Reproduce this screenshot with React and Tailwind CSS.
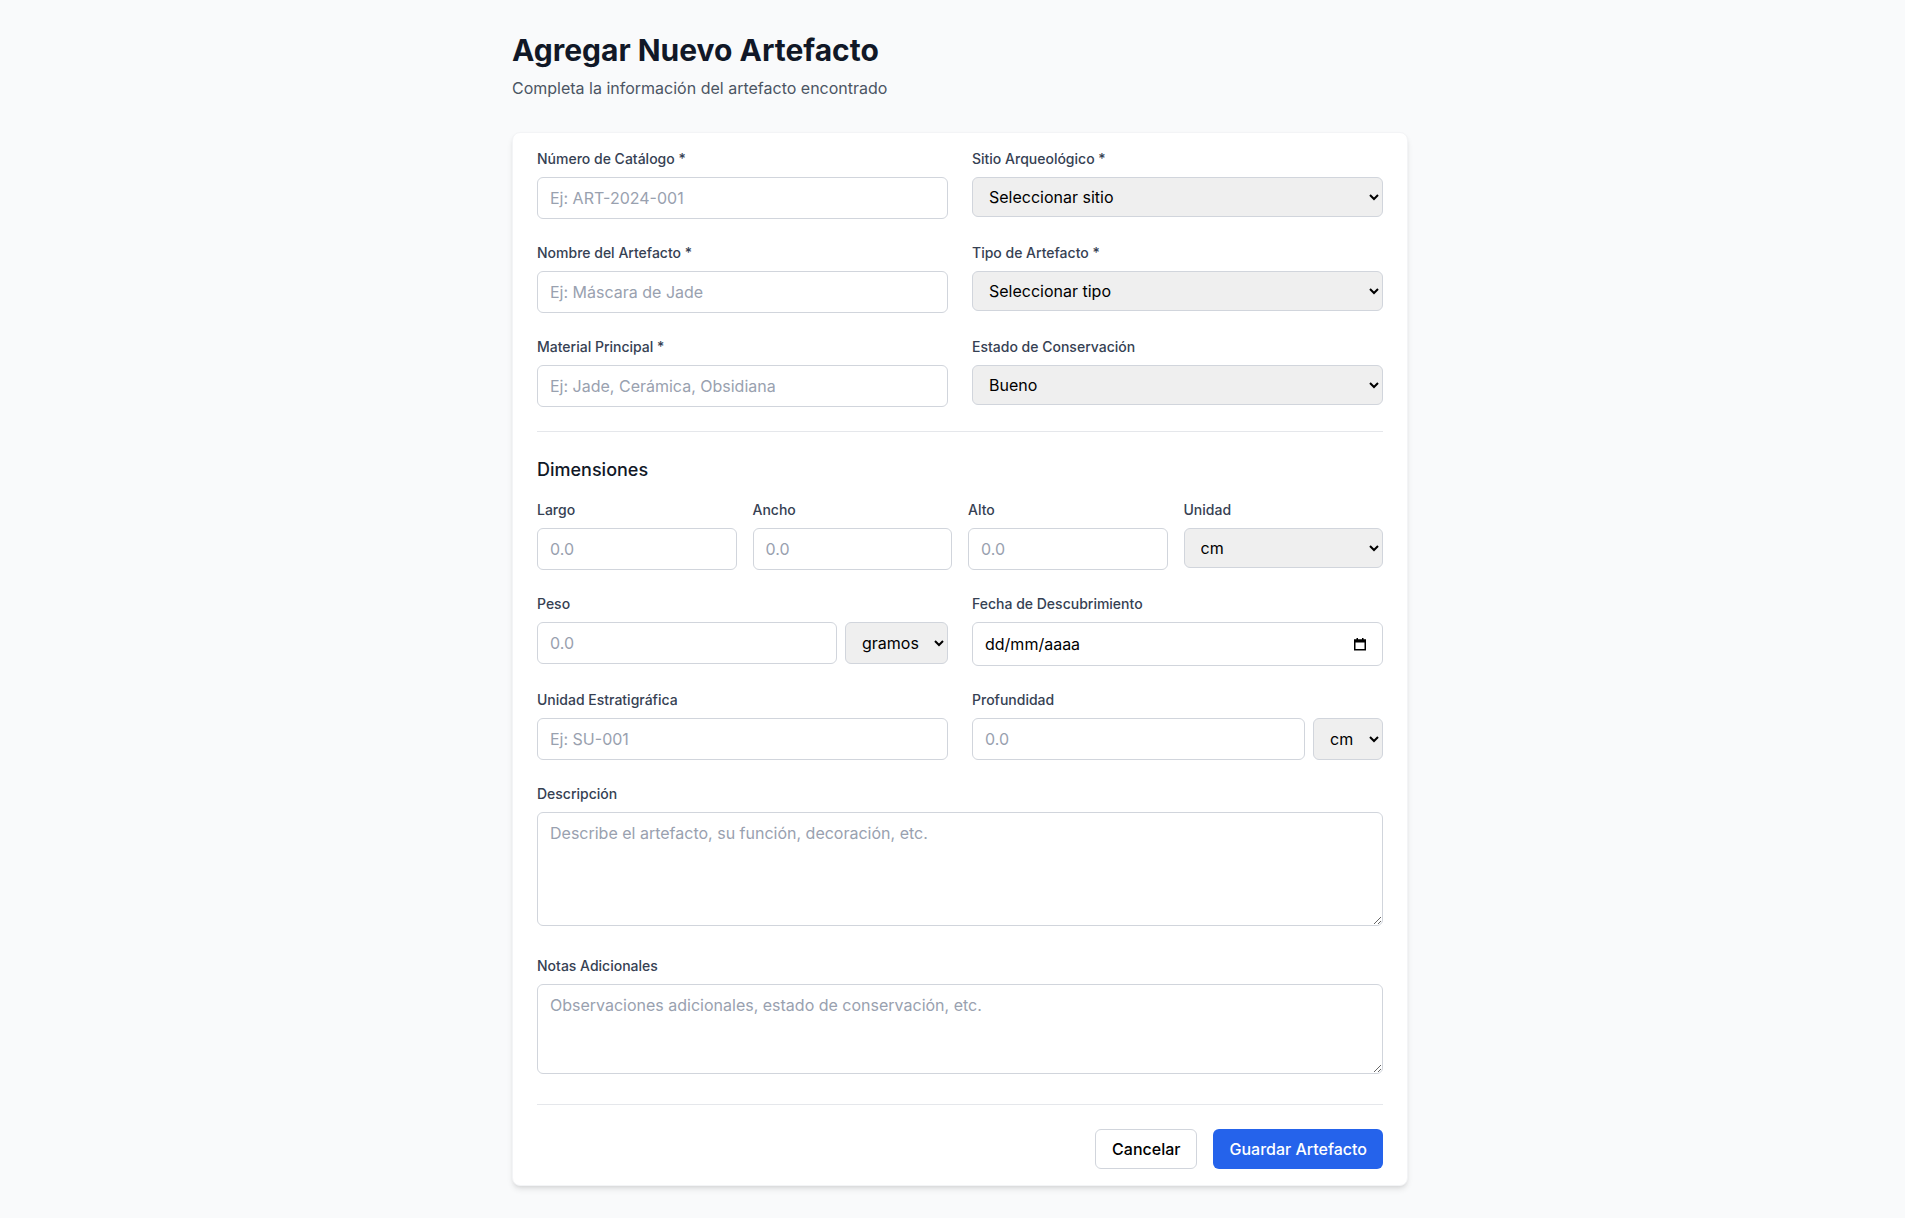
import { useState } from 'react';

const inputClass = 'w-full px-3 py-2 border border-gray-300 rounded-md text-gray-900 placeholder-gray-400 focus:outline-none';
const selectClass = 'w-full px-3 py-2 border border-gray-300 rounded-md bg-[#efefef] text-black focus:outline-none';
const labelClass = 'block text-sm font-medium text-gray-700 mb-2';

const CalendarIcon = () => (
    <svg width="14" height="14" viewBox="0 0 14 14" className="text-black">
        <rect x="1.75" y="3.25" width="10.5" height="9.5" fill="none" stroke="currentColor" strokeWidth="1.5" />
        <rect x="1" y="2.5" width="12" height="3" fill="currentColor" />
        <rect x="3.5" y="1" width="1.5" height="2" fill="currentColor" />
        <rect x="9" y="1" width="1.5" height="2" fill="currentColor" />
    </svg>
);

const App = () => {
    const [form, setForm] = useState({
        catalogo: '',
        sitio: '',
        nombre: '',
        tipo: '',
        material: '',
        estado: 'bueno',
        largo: '',
        ancho: '',
        alto: '',
        unidad: 'cm',
        peso: '',
        unidadPeso: 'gramos',
        estrato: '',
        profundidad: '',
        unidadProf: 'cm',
        descripcion: '',
        notas: ''
    });

    const update = (key) => (e) => setForm({ ...form, [key]: e.target.value });

    return (
        <div className="min-h-screen bg-[#f9fafb] pl-[15px] font-['Inter',sans-serif]">
            <div className="max-w-4xl mx-auto py-8">
                <h1 className="text-3xl font-bold text-[#111827]">Agregar Nuevo Artefacto</h1>
                <p className="mt-2 text-[#4b5563]">Completa la información del artefacto encontrado</p>

                <form onSubmit={(e) => e.preventDefault()} className="mt-8 bg-white border border-gray-100 rounded-lg shadow-md px-6 py-4">

                    {/* Datos generales */}
                    <div className="grid grid-cols-2 gap-6">
                        <div>
                            <label className={labelClass}>Número de Catálogo *</label>
                            <input type="text" value={form.catalogo} onChange={update('catalogo')} placeholder="Ej: ART-2024-001" className={inputClass} />
                        </div>
                        <div>
                            <label className={labelClass}>Sitio Arqueológico *</label>
                            <select value={form.sitio} onChange={update('sitio')} className={selectClass}>
                                <option value="">Seleccionar sitio</option>
                                <option value="1">Teotihuacán</option>
                                <option value="2">Palenque</option>
                            </select>
                        </div>
                        <div>
                            <label className={labelClass}>Nombre del Artefacto *</label>
                            <input type="text" value={form.nombre} onChange={update('nombre')} placeholder="Ej: Máscara de Jade" className={inputClass} />
                        </div>
                        <div>
                            <label className={labelClass}>Tipo de Artefacto *</label>
                            <select value={form.tipo} onChange={update('tipo')} className={selectClass}>
                                <option value="">Seleccionar tipo</option>
                                <option value="ceramica">Cerámica</option>
                                <option value="litico">Lítico</option>
                            </select>
                        </div>
                        <div>
                            <label className={labelClass}>Material Principal *</label>
                            <input type="text" value={form.material} onChange={update('material')} placeholder="Ej: Jade, Cerámica, Obsidiana" className={inputClass} />
                        </div>
                        <div>
                            <label className={labelClass}>Estado de Conservación</label>
                            <select value={form.estado} onChange={update('estado')} className={selectClass}>
                                <option value="excelente">Excelente</option>
                                <option value="bueno">Bueno</option>
                                <option value="regular">Regular</option>
                                <option value="malo">Malo</option>
                            </select>
                        </div>
                    </div>

                    {/* Dimensiones */}
                    <div className="mt-6 pt-6 border-t border-gray-200">
                        <h3 className="text-lg font-medium text-[#111827] mb-4">Dimensiones</h3>
                        <div className="grid grid-cols-4 gap-4">
                            <div>
                                <label className={labelClass}>Largo</label>
                                <input type="number" value={form.largo} onChange={update('largo')} placeholder="0.0" className={inputClass} />
                            </div>
                            <div>
                                <label className={labelClass}>Ancho</label>
                                <input type="number" value={form.ancho} onChange={update('ancho')} placeholder="0.0" className={inputClass} />
                            </div>
                            <div>
                                <label className={labelClass}>Alto</label>
                                <input type="number" value={form.alto} onChange={update('alto')} placeholder="0.0" className={inputClass} />
                            </div>
                            <div>
                                <label className={labelClass}>Unidad</label>
                                <select value={form.unidad} onChange={update('unidad')} className={selectClass}>
                                    <option value="cm">cm</option>
                                    <option value="mm">mm</option>
                                    <option value="m">m</option>
                                </select>
                            </div>
                        </div>
                    </div>

                    <div className="mt-6 grid grid-cols-2 gap-6">
                        <div>
                            <label className={labelClass}>Peso</label>
                            <div className="flex gap-2">
                                <input type="number" value={form.peso} onChange={update('peso')} placeholder="0.0" className={inputClass} />
                                <select value={form.unidadPeso} onChange={update('unidadPeso')} className="px-3 py-2 border border-gray-300 rounded-md bg-[#efefef] text-black focus:outline-none">
                                    <option value="gramos">gramos</option>
                                    <option value="kg">kg</option>
                                </select>
                            </div>
                        </div>
                        <div>
                            <label className={labelClass}>Fecha de Descubrimiento</label>
                            <div className="relative">
                                <input type="text" readOnly value="dd/mm/aaaa" className="w-full h-[44px] px-3 border border-gray-300 rounded-md text-black focus:outline-none" />
                                <span className="absolute right-[16px] top-[15px]">
                                    <CalendarIcon />
                                </span>
                            </div>
                        </div>
                        <div>
                            <label className={labelClass}>Unidad Estratigráfica</label>
                            <input type="text" value={form.estrato} onChange={update('estrato')} placeholder="Ej: SU-001" className={inputClass} />
                        </div>
                        <div>
                            <label className={labelClass}>Profundidad</label>
                            <div className="flex gap-2">
                                <input type="number" value={form.profundidad} onChange={update('profundidad')} placeholder="0.0" className={inputClass} />
                                <select value={form.unidadProf} onChange={update('unidadProf')} className="px-3 py-2 border border-gray-300 rounded-md bg-[#efefef] text-black focus:outline-none">
                                    <option value="cm">cm</option>
                                    <option value="m">m</option>
                                </select>
                            </div>
                        </div>
                    </div>

                    {/* Descripción */}
                    <div className="mt-6">
                        <label className={labelClass}>Descripción</label>
                        <textarea rows={4} value={form.descripcion} onChange={update('descripcion')} placeholder="Describe el artefacto, su función, decoración, etc." className={inputClass} />
                    </div>

                    <div className="mt-6">
                        <label className={labelClass}>Notas Adicionales</label>
                        <textarea rows={3} value={form.notas} onChange={update('notas')} placeholder="Observaciones adicionales, estado de conservación, etc." className={inputClass} />
                    </div>

                    {/* Acciones */}
                    <div className="mt-6 pt-6 border-t border-gray-200 flex justify-end items-start gap-4">
                        <button type="button" className="px-4 py-[7px] border border-gray-300 rounded-md bg-white text-black font-medium">
                            Cancelar
                        </button>
                        <button type="submit" className="px-4 py-2 rounded-md bg-[#2563eb] text-white font-medium hover:bg-[#1d4ed8]">
                            Guardar Artefacto
                        </button>
                    </div>
                </form>
            </div>
        </div>
    );
};

export default App;
